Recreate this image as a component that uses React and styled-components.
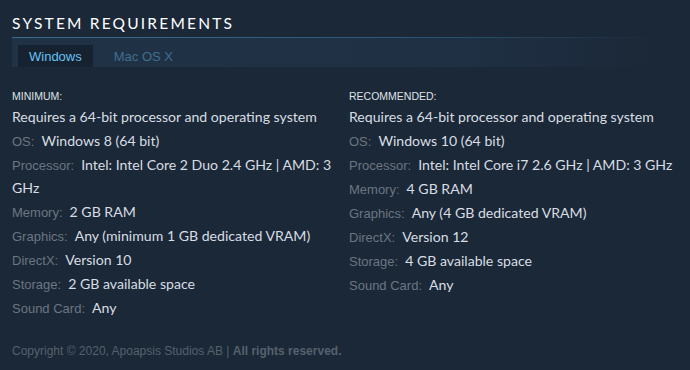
import React from "react";
import styled, { createGlobalStyle } from "styled-components";

const Global = createGlobalStyle`
  html, body { margin: 0; padding: 0; background: #1b2838; }
  body { width: 690px; height: 370px; overflow: hidden; }
`;

const Page = styled.div`
  width: 690px;
  height: 370px;
  background: #1b2838;
  padding: 0 12px;
  box-sizing: border-box;
  font-family: "Lato", "Open Sans", sans-serif;
`;

const Title = styled.h2`
  margin: 0;
  padding-top: 13px;
  height: 24px;
  font-family: "Lato", sans-serif;
  font-weight: 400;
  font-size: 15.5px;
  letter-spacing: 2.2px;
  line-height: 20px;
  color: #ffffff;
  text-transform: uppercase;
`;

const TabBar = styled.div`
  display: flex;
  align-items: flex-end;
  height: 29px;
  padding-left: 6px;
  border-top: 1px solid transparent;
  border-image: linear-gradient(to right, #3b6e8c 0%, #2d5673 60%, rgba(27,40,56,0) 100%) 1;
  background: linear-gradient(to right, #203246 0%, #1f3044 70%, rgba(27,40,56,0) 100%);
  width: 640px;
`;

const Tab = styled.div`
  height: 22px;
  padding: 0 11px;
  display: flex;
  align-items: center;
  font-family: "Liberation Sans", Arial, sans-serif;
  font-size: 13px;
  color: ${(p) => (p.$active ? "#67c1f5" : "#3f6f8f")};
  background: ${(p) => (p.$active ? "#162230" : "transparent")};
  margin-right: ${(p) => (p.$active ? "10px" : "0")};
`;

const Columns = styled.div`
  display: grid;
  grid-template-columns: 337px 1fr;
  padding-top: 21px;
`;

const Col = styled.div`
  min-width: 0;
`;

const Heading = styled.div`
  font-family: "Liberation Sans", Arial, sans-serif;
  font-size: 10.5px;
  color: #dfe3e6;
  line-height: 16px;
  margin-bottom: 1px;
`;

const List = styled.ul`
  list-style: none;
  margin: 0;
  padding: 0;
`;

const Item = styled.li`
  font-size: 14.1px;
  line-height: 23px;
  margin-bottom: 1px;
  color: #d8dde2;
`;

const Label = styled.span`
  font-family: "Liberation Sans", Arial, sans-serif;
  font-size: 13px;
  line-height: 1;
  color: #6b7681;
  margin-right: 7px;
`;

const Footer = styled.div`
  margin-top: 24px;
  font-family: "Liberation Sans", Arial, sans-serif;
  font-size: 12px;
  color: #56616c;
  b { font-weight: 700; }
`;

const minimum = [
  ["OS:", "Windows 8 (64 bit)"],
  ["Processor:", "Intel: Intel Core 2 Duo 2.4 GHz | AMD: 3 GHz"],
  ["Memory:", "2 GB RAM"],
  ["Graphics:", "Any (minimum 1 GB dedicated VRAM)"],
  ["DirectX:", "Version 10"],
  ["Storage:", "2 GB available space"],
  ["Sound Card:", "Any"],
];

const recommended = [
  ["OS:", "Windows 10 (64 bit)"],
  ["Processor:", "Intel: Intel Core i7 2.6 GHz | AMD: 3 GHz"],
  ["Memory:", "4 GB RAM"],
  ["Graphics:", "Any (4 GB dedicated VRAM)"],
  ["DirectX:", "Version 12"],
  ["Storage:", "4 GB available space"],
  ["Sound Card:", "Any"],
];

function ReqCol({ title, rows }) {
  return (
    <Col>
      <Heading>{title}</Heading>
      <List>
        <Item>Requires a 64-bit processor and operating system</Item>
        {rows.map(([l, v]) => (
          <Item key={l}>
            <Label>{l}</Label>
            {v}
          </Item>
        ))}
      </List>
    </Col>
  );
}

export default function App() {
  return (
    <Page>
      <Global />
      <Title>System Requirements</Title>
      <TabBar>
        <Tab $active>Windows</Tab>
        <Tab>Mac OS X</Tab>
      </TabBar>
      <Columns>
        <ReqCol title="MINIMUM:" rows={minimum} />
        <ReqCol title="RECOMMENDED:" rows={recommended} />
      </Columns>
      <Footer>
        Copyright © 2020, Apoapsis Studios AB | <b>All rights reserved.</b>
      </Footer>
    </Page>
  );
}
